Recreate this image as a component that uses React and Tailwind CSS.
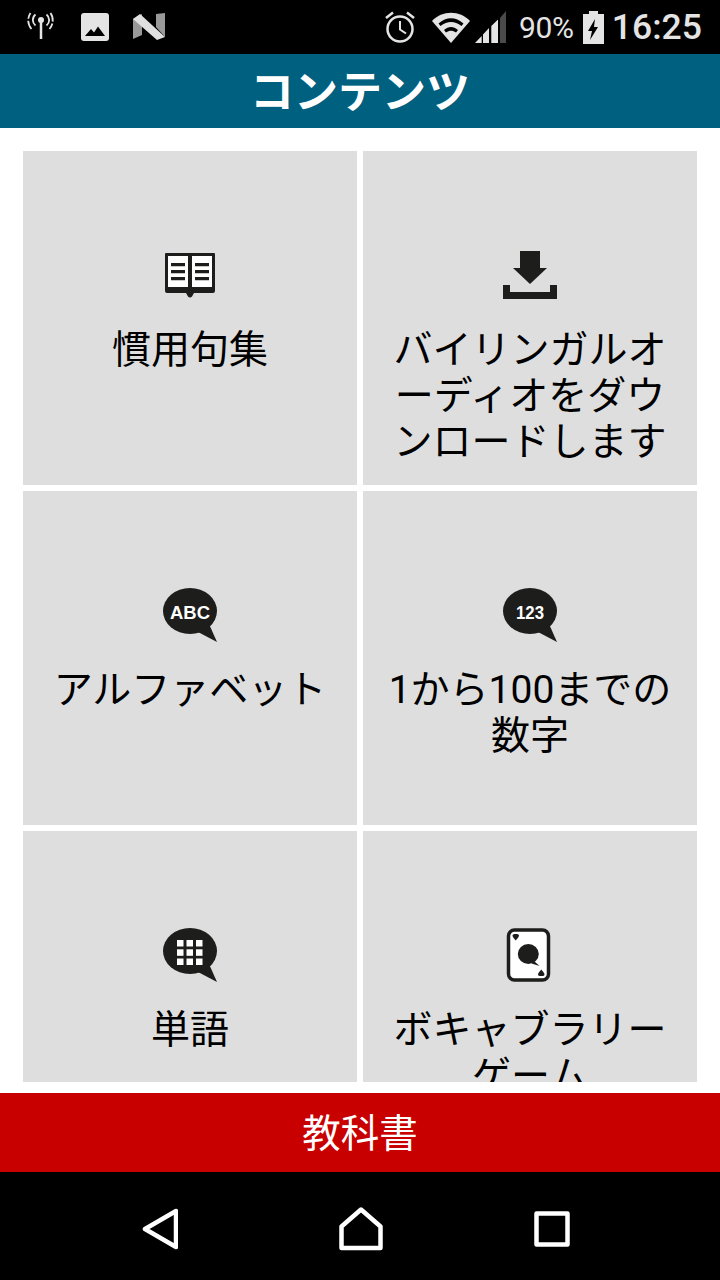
const cjk = "font-['Roboto','Noto_Sans_CJK_JP',sans-serif]";

function BookIcon() {
  return (
    <svg width="54" height="54" viewBox="0 0 54 54">
      <path d="M2 6a1 1 0 0 1 1-1h48a1 1 0 0 1 1 1v37a2 2 0 0 1-2 2H31l-2 3.500a2.400 2.400 0 0 1-4 0L23 45H4a2 2 0 0 1-2-2z" fill="#1d1d1b" />
      <rect x="5" y="8" width="20" height="31" fill="#fff" />
      <rect x="29" y="8" width="20" height="31" fill="#fff" />
      <path d="M8 15h14v3.300H8zM8 22h14v3.300H8zM8 29h14v3.300H8zM32 15h14v3.300H32zM32 22h14v3.300H32zM32 29h14v3.300H32z" fill="#1d1d1b" />
    </svg>
  );
}

function DownloadIcon() {
  return (
    <svg width="54" height="54" viewBox="0 0 54 54">
      <path d="M17 3h20v17h7L27 36 10 20h7zM0 37h7v7h40v-7h7v14H0z" fill="#1d1d1b" />
    </svg>
  );
}

function Bubble({ children }) {
  return (
    <svg width="54" height="54" viewBox="0 0 54 54">
      <ellipse cx="27" cy="23" rx="27" ry="23" fill="#1d1d1b" />
      <path d="M46 36l8 18-19-10z" fill="#1d1d1b" />
      {children}
    </svg>
  );
}

function BubbleText({ size, width, y, children }) {
  return (
    <text x="27" y={y} textAnchor="middle" fontSize={size} fontWeight="700" fill="#fff" fontFamily="Liberation Sans, sans-serif" textLength={width} lengthAdjust="spacingAndGlyphs">
      {children}
    </text>
  );
}

function GridDots() {
  const pos = [14, 23.5, 33];
  const rows = [12, 21.300, 30.500];
  return (
    <>
      {rows.map((y) =>
        pos.map((x) => <rect key={x + "-" + y} x={x} y={y} width="6.500" height="6.500" fill="#fff" />)
      )}
    </>
  );
}

function CardIcon() {
  return (
    <svg width="54" height="54" viewBox="0 0 54 54">
      <rect x="5.500" y="2" width="40" height="50" rx="6" fill="#fff" stroke="#1d1d1b" strokeWidth="3.500" />
      <ellipse cx="25.300" cy="26" rx="10.500" ry="10" fill="#1d1d1b" />
      <path d="M31 33l5.500 5-8-2.500z" fill="#1d1d1b" />
      <path d="M9.500 7.500c0-1 1-1.500 3.200-1.500s3.300.5 3.300 1.500c0 1.500-2 3.500-3.300 5-1.200-1.500-3.200-3.500-3.200-5z" fill="#1d1d1b" />
      <path d="M41.500 46.500c0 1-1 1.500-3.200 1.500s-3.300-.5-3.300-1.500c0-1.500 2-3.500 3.300-5 1.200 1.500 3.200 3.500 3.200 5z" fill="#1d1d1b" />
    </svg>
  );
}

const items = [
  { icon: <BookIcon />, label: "慣用句集" },
  { icon: <DownloadIcon />, label: "バイリンガルオーディオをダウンロードします" },
  { icon: <Bubble><BubbleText size="18.500" width="40" y="30.500">ABC</BubbleText></Bubble>, label: "アルファベット" },
  { icon: <Bubble><BubbleText size="18.500" width="28" y="31">123</BubbleText></Bubble>, label: "1から100までの数字" },
  { icon: <Bubble><GridDots /></Bubble>, label: "単語" },
  { icon: <CardIcon />, label: "ボキャブラリーゲーム" },
];

function StatusBar() {
  return (
    <div className="h-[54px] shrink-0 bg-black flex items-center text-[#e4e4e4]">
      <svg className="ml-[25px]" width="32" height="32" viewBox="0 0 32 32" fill="none" stroke="#e4e4e4">
        <circle cx="16" cy="9" r="3" fill="#e4e4e4" stroke="none" />
        <path d="M16 10v18" strokeWidth="2.500" />
        <path d="M10.500 14.500a7 7 0 0 1 0-11M21.500 3.500a7 7 0 0 1 0 11" strokeWidth="1.800" />
        <path d="M6.500 18a13 13 0 0 1-1-16M25.500 2a13 13 0 0 1-1 16" strokeWidth="1.800" strokeDasharray="9 2" />
      </svg>
      <svg className="ml-[24px]" width="28" height="28" viewBox="0 0 28 28">
        <rect width="28" height="28" rx="3" fill="#e4e4e4" />
        <path d="M4 23l6-7 3 3.500 4-6 7 9.500z" fill="#000" />
      </svg>
      <svg className="ml-[24px]" width="32" height="28" viewBox="0 0 32 28">
        <path d="M0 6l9-5v21L0 26z" fill="#999" />
        <path d="M23 1l9-1v24l-9-10z" fill="#999" />
        <path d="M0 6l7-5 25 23-8 3z" fill="#e0e0e0" />
      </svg>
      <svg className="ml-[219px]" width="32" height="32" viewBox="0 0 32 32" fill="none" stroke="#e4e4e4">
        <circle cx="16" cy="18" r="12.500" strokeWidth="2.500" />
        <path d="M16 10v8.500l6 4" strokeWidth="2" />
        <path d="M2 7l7-5.500M30 7l-7-5.500" strokeWidth="2.500" />
      </svg>
      <svg className="ml-[16px]" width="38" height="32" viewBox="0 0 38 32">
        <path d="M0 10C10-1 28-1 38 10L19 32z" fill="#e4e4e4" />
        <path d="M6.500 12.500c8-7 17-7 25 0l-2 2.500c-7-5.500-14-5.500-21 0zM12 19c4.500-4 9.500-4 14 0l-2 2.500c-3.500-2.500-6.500-2.500-10 0z" fill="#000" />
      </svg>
      <svg className="ml-[5px]" width="31" height="32" viewBox="0 0 31 32">
        <path d="M25 7l6-7v32h-6z" fill="#4a4a4a" />
        <path d="M0 32l6.700-7v7zM8 23.500l6-6.500v15H8zM16.300 15L23 8.500V32h-6.700z" fill="#e4e4e4" />
      </svg>
      <span className="ml-[13px] font-['Roboto',sans-serif] text-[30px] leading-none tracking-[-0.300px] pt-[2px]">90%</span>
      <svg className="ml-[9px]" width="21" height="33" viewBox="0 0 21 33">
        <path d="M6 0h9v3h6v30H0V3h6z" fill="#e4e4e4" />
        <path d="M12 8L5 20h4l-2 9 8-13h-4z" fill="#000" />
      </svg>
      <span className="ml-[8px] font-['Roboto',sans-serif] text-[35.500px] font-medium leading-none pt-[2px]">16:25</span>
    </div>
  );
}

function Cell({ icon, label }) {
  return (
    <div className="h-[334px] bg-[#dedede] flex flex-col items-center pt-[97px] overflow-hidden">
      <div className="h-[54px] shrink-0">{icon}</div>
      <p className={`${cjk} mt-[25px] w-[292px] text-center text-[39px] leading-[46px] text-black`}>{label}</p>
    </div>
  );
}

export default function App() {
  return (
    <div className="w-[720px] h-[1280px] flex flex-col bg-white overflow-hidden">
      <StatusBar />
      <div className={`${cjk} h-[74px] shrink-0 bg-[#006080] flex items-center justify-center pt-[3px] text-white text-[44px] font-bold`}>
        コンテンツ
      </div>
      <div className="h-[965px] shrink-0 pt-[23px] pb-[11px] px-[23px]">
        <div className="h-full overflow-hidden">
          <div className="grid grid-cols-2 gap-[6px]">
            {items.map((item) => (
              <Cell key={item.label} icon={item.icon} label={item.label} />
            ))}
          </div>
        </div>
      </div>
      <div className={`${cjk} h-[79px] shrink-0 bg-[#c80000] flex items-center justify-center pt-[3px] text-white text-[38.500px]`}>
        教科書
      </div>
      <div className="flex-1 bg-black flex items-center pt-[6px]">
        <svg className="ml-[142px]" width="36" height="42" viewBox="0 0 36 42" fill="none" stroke="#fff" strokeWidth="4.500" strokeLinejoin="round">
          <path d="M34 3v36L3 21z" />
        </svg>
        <svg className="ml-[161px]" width="44" height="44" viewBox="0 0 44 44" fill="none" stroke="#fff" strokeWidth="4.500" strokeLinejoin="round">
          <path d="M2.500 41V19.500L22 2.500l19.500 17V41z" />
        </svg>
        <svg className="ml-[151px]" width="36" height="36" viewBox="0 0 36 36" fill="none" stroke="#fff" strokeWidth="4.500" strokeLinejoin="round">
          <rect x="2.500" y="2.500" width="31" height="31" />
        </svg>
      </div>
    </div>
  );
}
